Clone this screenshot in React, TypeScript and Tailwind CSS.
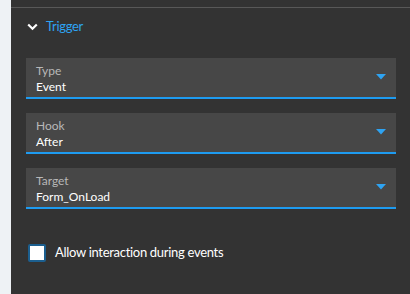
import React from "react";

function Field({ label, value }: { label: string; value: string }) {
  return (
    <div className="h-[41px] bg-[#474747] border-b-2 border-[#1e9bf0] flex items-center pl-[10px] pr-[10px]">
      <div className="flex-1 flex flex-col pt-[2px]">
        <span className="text-[12px] leading-[16px] text-[#b8b8b8]">{label}</span>
        <span className="text-[12px] leading-[16px] text-white">{value}</span>
      </div>
      <svg width="10" height="6" viewBox="0 0 10 6" className="mt-[-1px]">
        <path d="M0 0 L10 0 L5 5.5 Z" fill="#2ea3f2" />
      </svg>
    </div>
  );
}

export default function App() {
  return (
    <div className="w-[410px] h-[294px] flex bg-[#eef2f5]" style={{ fontFamily: "Lato, 'Noto Sans', sans-serif" }}>
      <div className="w-[11px] shrink-0" />
      <div className="flex-1 bg-[#333333] flex flex-col">
        <div className="h-[7px]" />
        <div className="h-[1px] bg-[#585858]" />
        <div className="flex items-center h-[40px] pl-[16px] pb-[2px]">
          <svg width="11" height="8" viewBox="0 0 11 8" className="mr-[8px]">
            <path d="M1.2 1.5 L5.5 5.8 L9.8 1.5" stroke="white" strokeWidth="2.2" fill="none" />
          </svg>
          <span className="text-[13px] tracking-[-0.3px] text-[#2ea3f2]">Trigger</span>
        </div>
        <div className="flex flex-col gap-[14px] pl-[15px] pr-[14px] pt-[10px]">
          <Field label="Type" value="Event" />
          <Field label="Hook" value="After" />
          <Field label="Target" value="Form_OnLoad" />
        </div>
        <div className="flex items-center pl-[17px] mt-[34px]">
          <div className="w-[18px] h-[18px] rounded-[2px] border-2 border-[#1c5f8f] bg-white" />
          <span className="ml-[9px] text-[13px] tracking-[-0.3px] text-white">Allow interaction during events</span>
        </div>
      </div>
    </div>
  );
}
